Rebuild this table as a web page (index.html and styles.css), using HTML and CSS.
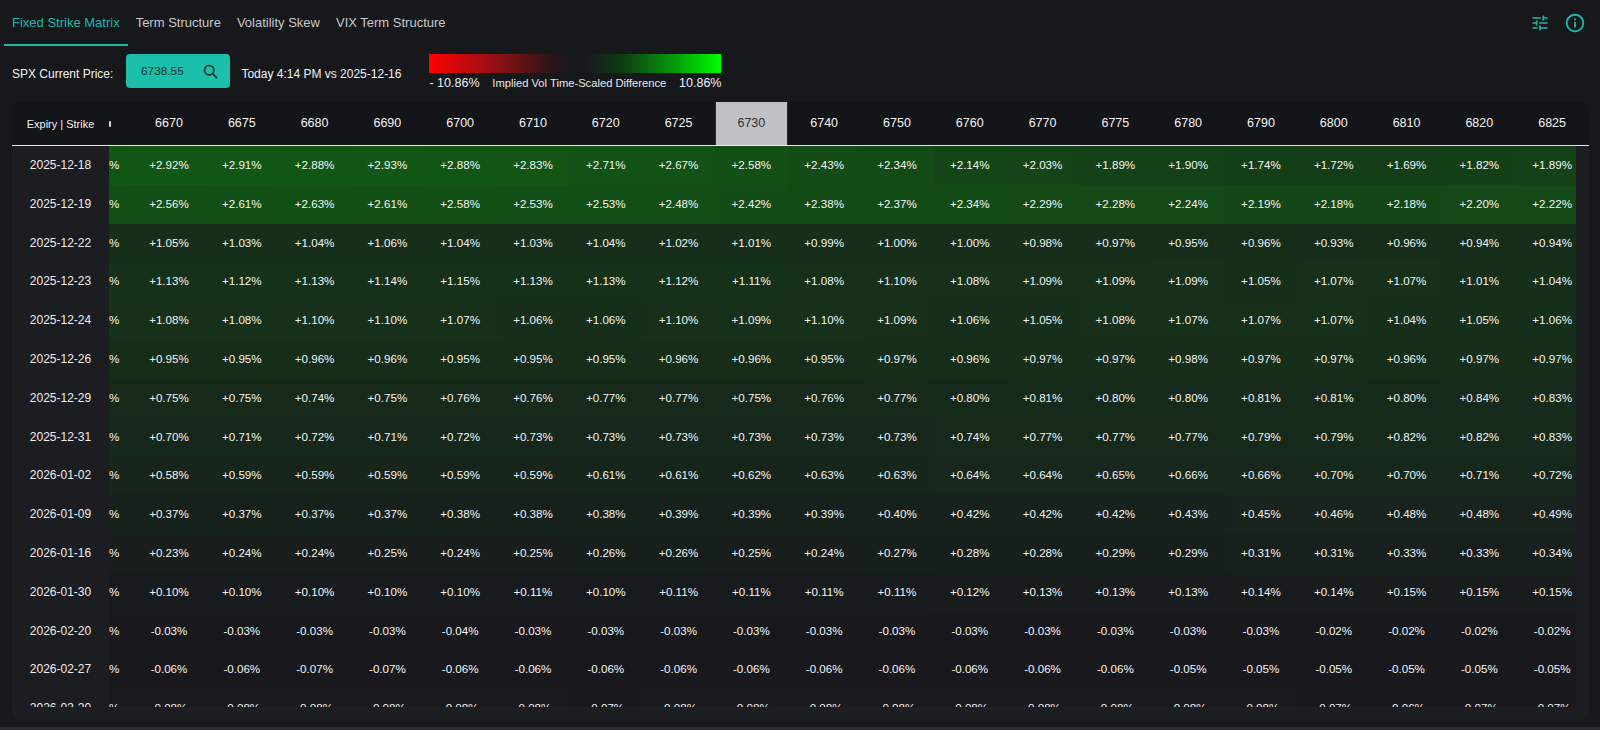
FILE: index.html
```html
<!DOCTYPE html>
<html lang="en">
<head>
<meta charset="utf-8">
<title>Fixed Strike Matrix</title>
<link rel="stylesheet" href="styles.css">
</head>
<body>
<div class="app">
  <nav class="tabs">
    <div class="tab active">Fixed Strike Matrix</div>
    <div class="tab">Term Structure</div>
    <div class="tab">Volatility Skew</div>
    <div class="tab">VIX Term Structure</div>
    <div class="tab-actions">
      <svg class="icon-tune" width="20" height="20" viewBox="0 0 24 24" fill="currentColor"><path d="M3 17v2h6v-2H3zM3 5v2h10V5H3zm10 16v-2h8v-2h-8v-2h-2v6h2zM7 9v2H3v2h4v2h2V9H7zm14 4v-2H11v2h10zm-6-4h2V7h4V5h-4V3h-2v6z"/></svg>
      <svg class="icon-info" width="22" height="22" viewBox="0 0 24 24" fill="currentColor"><path d="M11 7h2v2h-2zm0 4h2v6h-2zm1-9C6.48 2 2 6.48 2 12s4.48 10 10 10 10-4.48 10-10S17.52 2 12 2zm0 18c-4.41 0-8-3.59-8-8s3.59-8 8-8 8 3.59 8 8-3.59 8-8 8z"/></svg>
    </div>
  </nav>

  <div class="controls">
    <span class="ctl-label">SPX Current Price:</span>
    <button class="price-btn">
      <span class="price">6738.55</span>
      <svg width="15" height="15" viewBox="0 0 16 16" fill="none" stroke="currentColor" stroke-width="1.8" stroke-linecap="round"><circle cx="6.6" cy="6.6" r="5"/><line x1="10.4" y1="10.4" x2="14.5" y2="14.5"/></svg>
    </button>
    <span class="ctl-label compare">Today 4:14 PM vs 2025-12-16</span>
    <div class="legend">
      <div class="legend-bar"></div>
      <div class="legend-labels">
        <span class="lg-num">- 10.86%</span>
        <span class="lg-mid">Implied Vol Time-Scaled Difference</span>
        <span class="lg-num">10.86%</span>
      </div>
    </div>
  </div>

  <div class="matrix">
    <div class="thead">
      <div class="corner">Expiry | Strike</div>
      <div class="hclip"><div class="hrow" id="hrow"></div></div>
    </div>
    <div class="tbody">
      <div class="dates" id="dates"></div>
      <div class="dclip"><div class="drows" id="drows"></div></div>
      <div class="vtrack"></div>
    </div>
    <div class="htrack"></div>
  </div>
</div>
<script src="script.js"></script>
</body>
</html>
```

FILE: styles.css
```css
* { box-sizing: border-box; }

html, body {
  margin: 0;
  padding: 0;
  background: #17181c;
  height: 730px;
  overflow: hidden;
}

body {
  font-family: "Liberation Sans", Arial, sans-serif;
  color: #eeeeee;
}

.app {
  height: 730px;
  border-bottom: 3px solid #2b2c30;
}

/* Tabs */
.tabs {
  display: flex;
  align-items: flex-start;
  height: 46px;
  padding-left: 4px;
}

.tab {
  height: 46px;
  padding: 1px 8px 0;
  line-height: 43px;
  font-size: 13px;
  color: #c6c7cb;
  border-bottom: 2px solid transparent;
  white-space: nowrap;
}

.tab.active {
  color: #1db7a5;
  border-bottom-color: #1db7a5;
}

.tab-actions {
  margin-left: auto;
  display: flex;
  align-items: center;
  gap: 14px;
  height: 46px;
  padding-right: 14px;
  color: #1db7a5;
}

.tab-actions svg { display: block; }

/* Controls */
.controls {
  display: flex;
  align-items: flex-start;
  padding: 8px 12px 0;
  height: 56px;
}

.ctl-label {
  font-size: 12px;
  line-height: 16px;
  margin-top: 12px;
  color: #f0f0f0;
  white-space: nowrap;
}

.price-btn {
  margin-left: 13px;
  width: 104px;
  height: 34px;
  border: none;
  border-radius: 4px;
  background: #1bbfaa;
  color: #13302c;
  display: flex;
  align-items: center;
  justify-content: center;
  gap: 19px;
  padding: 0 0 0 2px;
  font-family: inherit;
  font-size: 11.8px;
}

.price-btn svg { display: block; margin-top: 1px; }

.compare { margin-left: 11px; }

.legend {
  width: 292px;
  margin-left: 28px;
}

.legend-bar {
  height: 19px;
  background: linear-gradient(to right, #ff0000 0%, #a01013 20%, #2a1417 42%, #18191d 48%, #18191d 54%, #0e3a12 66%, #05a009 85%, #00ff00 100%);
}

.legend-labels {
  display: flex;
  justify-content: space-between;
  align-items: baseline;
  margin-top: 3px;
  line-height: 14px;
  white-space: nowrap;
}

.lg-num { font-size: 12.5px; color: #f0f0f0; }
.lg-mid { font-size: 11.2px; color: #e8e8e8; }

/* Matrix */
.matrix {
  margin: 0 11px 0 12px;
  height: 618px;
  border-radius: 8px;
  overflow: hidden;
  background: #1d1e22;
}

.thead {
  display: flex;
  height: 44px;
  background: #141519;
  border-bottom: 1px solid #e6e6e6;
}

.corner {
  flex: none;
  width: 97px;
  display: flex;
  align-items: center;
  justify-content: center;
  font-size: 11px;
  color: #f0f0f0;
}

.hclip {
  flex: 1;
  overflow: hidden;
}

.hrow {
  display: flex;
  height: 43px;
}

.hcell {
  flex: none;
  width: 72.8px;
  height: 43px;
  line-height: 43px;
  text-align: center;
  font-size: 12.5px;
  color: #f2f2f2;
}

.hcell.partial {
  width: 23.6px;
  position: relative;
}

/* sliver of the scrolled-away strike label */
.hcell.partial::before {
  content: "";
  position: absolute;
  left: 0;
  top: 19px;
  width: 1.5px;
  height: 6px;
  background: #d8d8d8;
  border-radius: 1px;
}

.hcell.current {
  background: #c1c1c3;
  color: #2f3034;
  border-left: 1px solid #2c2d31;
  border-right: 1px solid #2c2d31;
}

.tbody {
  display: flex;
  height: 561px;
  overflow: hidden;
}

.dates {
  flex: none;
  width: 97px;
  background: #1c1d21;
  overflow: hidden;
}

.date {
  height: 38.8px;
  line-height: 38.8px;
  text-align: center;
  font-size: 12px;
  color: #ececec;
}

.dclip {
  flex: 1;
  overflow: hidden;
  background: #18191d;
}

.drow {
  display: flex;
  height: 38.8px;
}

.dcell {
  flex: none;
  width: 72.8px;
  height: 38.8px;
  line-height: 38.8px;
  text-align: center;
  font-size: 11.6px;
  color: #f4f4f4;
}

.dcell.partial {
  width: 23.6px;
  text-align: left;
  overflow: hidden;
}

.vtrack {
  flex: none;
  width: 13px;
  background: #1d1e22;
}

.htrack {
  height: 13px;
  background: #1d1e22;
}
```

FILE: script.js
```js
var strikes = [6665, 6670, 6675, 6680, 6690, 6700, 6710, 6720, 6725, 6730, 6740, 6750, 6760, 6770, 6775, 6780, 6790, 6800, 6810, 6820, 6825];

var rows = [
  ["2025-12-18", [2.90, 2.92, 2.91, 2.88, 2.93, 2.88, 2.83, 2.71, 2.67, 2.58, 2.43, 2.34, 2.14, 2.03, 1.89, 1.90, 1.74, 1.72, 1.69, 1.82, 1.89]],
  ["2025-12-19", [2.55, 2.56, 2.61, 2.63, 2.61, 2.58, 2.53, 2.53, 2.48, 2.42, 2.38, 2.37, 2.34, 2.29, 2.28, 2.24, 2.19, 2.18, 2.18, 2.20, 2.22]],
  ["2025-12-22", [1.06, 1.05, 1.03, 1.04, 1.06, 1.04, 1.03, 1.04, 1.02, 1.01, 0.99, 1.00, 1.00, 0.98, 0.97, 0.95, 0.96, 0.93, 0.96, 0.94, 0.94]],
  ["2025-12-23", [1.12, 1.13, 1.12, 1.13, 1.14, 1.15, 1.13, 1.13, 1.12, 1.11, 1.08, 1.10, 1.08, 1.09, 1.09, 1.09, 1.05, 1.07, 1.07, 1.01, 1.04]],
  ["2025-12-24", [1.09, 1.08, 1.08, 1.10, 1.10, 1.07, 1.06, 1.06, 1.10, 1.09, 1.10, 1.09, 1.06, 1.05, 1.08, 1.07, 1.07, 1.07, 1.04, 1.05, 1.06]],
  ["2025-12-26", [0.95, 0.95, 0.95, 0.96, 0.96, 0.95, 0.95, 0.95, 0.96, 0.96, 0.95, 0.97, 0.96, 0.97, 0.97, 0.98, 0.97, 0.97, 0.96, 0.97, 0.97]],
  ["2025-12-29", [0.75, 0.75, 0.75, 0.74, 0.75, 0.76, 0.76, 0.77, 0.77, 0.75, 0.76, 0.77, 0.80, 0.81, 0.80, 0.80, 0.81, 0.81, 0.80, 0.84, 0.83]],
  ["2025-12-31", [0.70, 0.70, 0.71, 0.72, 0.71, 0.72, 0.73, 0.73, 0.73, 0.73, 0.73, 0.73, 0.74, 0.77, 0.77, 0.77, 0.79, 0.79, 0.82, 0.82, 0.83]],
  ["2026-01-02", [0.58, 0.58, 0.59, 0.59, 0.59, 0.59, 0.59, 0.61, 0.61, 0.62, 0.63, 0.63, 0.64, 0.64, 0.65, 0.66, 0.66, 0.70, 0.70, 0.71, 0.72]],
  ["2026-01-09", [0.37, 0.37, 0.37, 0.37, 0.37, 0.38, 0.38, 0.38, 0.39, 0.39, 0.39, 0.40, 0.42, 0.42, 0.42, 0.43, 0.45, 0.46, 0.48, 0.48, 0.49]],
  ["2026-01-16", [0.23, 0.23, 0.24, 0.24, 0.25, 0.24, 0.25, 0.26, 0.26, 0.25, 0.24, 0.27, 0.28, 0.28, 0.29, 0.29, 0.31, 0.31, 0.33, 0.33, 0.34]],
  ["2026-01-30", [0.10, 0.10, 0.10, 0.10, 0.10, 0.10, 0.11, 0.10, 0.11, 0.11, 0.11, 0.11, 0.12, 0.13, 0.13, 0.13, 0.14, 0.14, 0.15, 0.15, 0.15]],
  ["2026-02-20", [-0.03, -0.03, -0.03, -0.03, -0.03, -0.04, -0.03, -0.03, -0.03, -0.03, -0.03, -0.03, -0.03, -0.03, -0.03, -0.03, -0.03, -0.02, -0.02, -0.02, -0.02]],
  ["2026-02-27", [-0.06, -0.06, -0.06, -0.07, -0.07, -0.06, -0.06, -0.06, -0.06, -0.06, -0.06, -0.06, -0.06, -0.06, -0.06, -0.05, -0.05, -0.05, -0.05, -0.05, -0.05]],
  ["2026-03-20", [-0.08, -0.08, -0.08, -0.08, -0.08, -0.08, -0.08, -0.07, -0.08, -0.08, -0.08, -0.08, -0.08, -0.08, -0.08, -0.08, -0.08, -0.07, -0.06, -0.07, -0.07]]
];

var MAX = 10.86;
var BASE = [24, 25, 29];

function cellColor(v) {
  var t = Math.min(Math.abs(v) / MAX, 1);
  var tgt = v >= 0 ? [0, 255, 0] : [255, 0, 0];
  var c = BASE.map(function (b, i) { return Math.round(b + (tgt[i] - b) * t); });
  return "rgb(" + c.join(",") + ")";
}

function fmt(v) {
  return (v >= 0 ? "+" : "-") + Math.abs(v).toFixed(2) + "%";
}

/* The grid is scrolled so that only the tail of the first strike column shows. */
var hrow = document.getElementById("hrow");
strikes.forEach(function (s, i) {
  var d = document.createElement("div");
  if (i === 0) {
    d.className = "hcell partial";
  } else {
    d.className = "hcell" + (s === 6730 ? " current" : "");
    d.textContent = s;
  }
  hrow.appendChild(d);
});

var dates = document.getElementById("dates");
var drows = document.getElementById("drows");
rows.forEach(function (r) {
  var dt = document.createElement("div");
  dt.className = "date";
  dt.textContent = r[0];
  dates.appendChild(dt);

  var row = document.createElement("div");
  row.className = "drow";
  r[1].forEach(function (v, i) {
    var c = document.createElement("div");
    c.style.background = cellColor(v);
    if (i === 0) {
      c.className = "dcell partial";
      c.textContent = "%";
    } else {
      c.className = "dcell";
      c.textContent = fmt(v);
    }
    row.appendChild(c);
  });
  drows.appendChild(row);
});
```
